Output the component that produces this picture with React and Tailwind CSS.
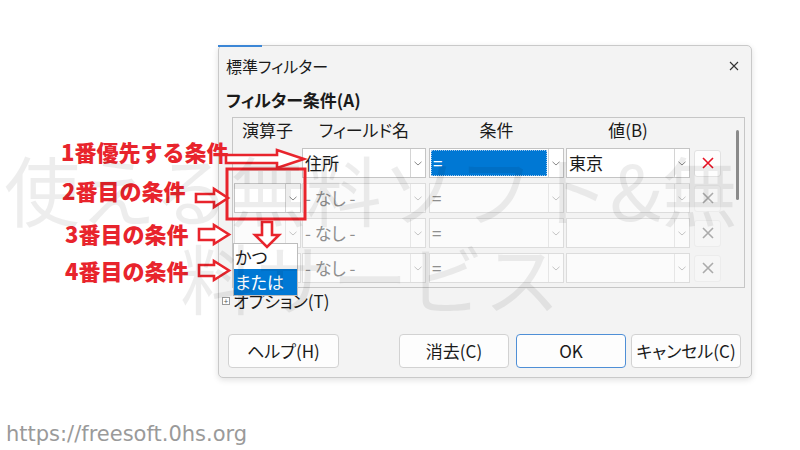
import React from 'react'

const jp = { fontFamily: '"Noto Sans CJK JP", "Noto Sans", sans-serif' }

function Chevron({ color = '#8a8a8a' }) {
  return (
    <svg width="8" height="5" viewBox="0 0 8 5">
      <polyline points="0.5,0.8 4,4 7.5,0.8" fill="none" stroke={color} strokeWidth="1" />
    </svg>
  )
}

// combobox like the LibreOffice/Win11 one
function Combo({ w, text, muted, faint, selected }) {
  return (
    <div
      className={`flex h-[30px] shrink-0 border ${faint ? 'border-[#dcdcdc] bg-[#fbfbfb]' : 'border-[#c4c4c4] bg-white'}`}
      style={{ width: w }}
    >
      <div className="flex flex-1 items-center p-[1px]">
        {selected ? (
          <div className="flex h-full w-full items-center border border-dotted border-[#9cc4ec] bg-[#0078d4] pl-[1px] text-white">
            {text}
          </div>
        ) : (
          <span className={`pl-[1px] ${muted ? 'text-[#8f8f8f]' : 'text-[#1a1a1a]'}`}>{text}</span>
        )}
      </div>
      <div className={`flex w-[15px] items-center justify-center border-l ${faint ? 'border-[#e6e6e6]' : 'border-[#d4d4d4]'}`}>
        <Chevron color={faint ? '#c4c4c4' : '#8a8a8a'} />
      </div>
    </div>
  )
}

function DeleteBtn({ active }) {
  return (
    <div
      className={`ml-[4px] flex h-[27px] w-[27px] shrink-0 items-center justify-center rounded-[3px] border ${active ? 'border-[#e2e2e2] bg-[#fdfdfd]' : 'border-[#ececec] bg-[#f6f6f6]'}`}
    >
      <svg width="12" height="12" viewBox="0 0 12 12">
        <path d="M1 1 L11 11 M11 1 L1 11" stroke={active ? '#e81123' : '#ababab'} strokeWidth="1.6" />
      </svg>
    </div>
  )
}

function Row({ op, field, cond, value, first, children }) {
  return (
    <div className="relative flex h-[30px] items-center">
      <div className="ml-[1px] w-[67px] shrink-0">{op}</div>
      <div className="ml-[1px]">
        <Combo w={124} text={field} muted={!first} faint={!first} />
      </div>
      <div className="ml-[3px]">
        <Combo w={135} text={cond} selected={first} muted={!first} faint={!first} />
      </div>
      <div className="ml-[2px]">
        <Combo w={124} text={value} faint={!first} />
      </div>
      <DeleteBtn active={first} />
      {children}
    </div>
  )
}

function Button({ w, ml, primary, children }) {
  return (
    <div
      className={`flex h-[34px] shrink-0 items-center justify-center rounded-[4px] border bg-[#fdfdfd] text-[#1a1a1a] ${primary ? 'border-[#4f8fd6]' : 'border-[#d2d2d2]'}`}
      style={{ width: w, marginLeft: ml }}
    >
      {children}
    </div>
  )
}

function Dialog() {
  return (
    <div className="relative flex h-[333px] w-[534px] flex-col rounded-[5px] border border-[#c9c9c9] bg-[#f3f3f3] text-[17px] [font-feature-settings:'palt'] shadow-[0_2px_6px_rgba(0,0,0,0.12)]" style={jp}>
      <span className="absolute left-[-1px] top-[-1px] h-[2px] w-[44px] bg-[#3b86d6]" />
      <div className="flex h-[39px] items-center justify-between pl-[7px] pr-[12px]">
        <span className="text-[16px] text-[#1a1a1a]">標準フィルター</span>
        <svg width="10" height="10" viewBox="0 0 10 10">
          <path d="M1 1 L9 9 M9 1 L1 9" stroke="#333" strokeWidth="1.1" />
        </svg>
      </div>
      <div className="mt-[5px] h-[20px] pl-[7px] font-bold leading-[20px] text-[#1a1a1a]">フィルター条件(A)</div>
      <div className="ml-[13px] mt-[7px] flex h-[171px] w-[513px] border border-[#c6c6c6]">
        <div className="flex flex-1 flex-col">
          <div className="flex h-[24px] items-center text-[#1a1a1a]">
            <div className="ml-[1px] w-[67px] text-center">演算子</div>
            <div className="ml-[1px] w-[124px] text-center">フィールド名</div>
            <div className="ml-[3px] w-[135px] text-center">条件</div>
            <div className="ml-[2px] w-[124px] text-center">値(B)</div>
          </div>
          <div className="mt-[6px] flex flex-col gap-[5px]">
            <Row first field="住所" cond="=" value="東京" op={null} />
            <Row field="- なし -" cond="=" value="" op={<Combo w={67} text="" />} />
            <Row field="- なし -" cond="=" value="" op={<Combo w={67} text="" faint />}>
              <div className="absolute left-0 top-[25px] z-10 flex w-[65px] flex-col border border-[#bdbdbd] bg-white">
                <div className="flex h-[25px] items-center pl-[1px] text-[#1a1a1a]">かつ</div>
                <div className="flex h-[26px] items-center bg-[#0078d4] pl-[1px] text-white">または</div>
              </div>
            </Row>
            <Row field="- なし -" cond="=" value="" op={<Combo w={67} text="" faint />} />
          </div>
        </div>
        <div className="w-[8px] pr-[4px] pt-[12px]">
          <div className="h-[70px] w-[3px] rounded-full bg-[#8a8a8a]" />
        </div>
      </div>
      <div className="mt-[3px] flex h-[20px] items-center pl-[3px] text-[#1a1a1a]">
        <span className="mr-[3px] flex h-[8px] w-[8px] items-center justify-center border border-[#9a9a9a] bg-white text-[8px] leading-none text-[#555]">+</span>
        <span>オプション(T)</span>
      </div>
      <div className="mt-[23px] flex">
        <Button w={111} ml={9}>ヘルプ(H)</Button>
        <Button w={110} ml={60}>消去(C)</Button>
        <Button w={110} ml={7} primary>OK</Button>
        <Button w={110} ml={5}>キャンセル(C)</Button>
      </div>
    </div>
  )
}

function Annotations() {
  const red = '#e8242c'
  const labels = [
    { t: '1番優先する条件', x: 61, y: 138 },
    { t: '2番目の条件', x: 62, y: 177 },
    { t: '3番目の条件', x: 65, y: 220 },
    { t: '4番目の条件', x: 65, y: 257 },
  ]
  return (
    <>
      {labels.map((l) => (
        <div
          key={l.t}
          className="absolute text-[22px] font-black leading-[26px] text-[#e8242c]"
          style={{ left: l.x, top: l.y, ...jp }}
        >
          {l.t}
        </div>
      ))}
      <svg className="pointer-events-none absolute left-0 top-0 z-20" width="800" height="450">
        <g fill="#fff" stroke={red} strokeWidth="2.6" strokeLinejoin="miter">
          <polygon points="226,155 277,155 277,150 304,159 277,168 277,163 226,163" />
          <polygon points="196,194 214,194 214,189 228,198 214,207 214,202 196,202" />
          <polygon points="199,229 214,229 214,225 229,234.5 214,244 214,240 199,240" />
          <polygon points="199,265 214,265 214,261 229,270.5 214,280 214,276 199,276" />
          <polygon points="262,222 272,222 272,235 279,235 267,247 255,235 262,235" />
        </g>
        <rect x="227" y="169" width="78" height="50" fill="none" stroke={red} strokeWidth="3" />
      </svg>
    </>
  )
}

export default function App() {
  return (
    <div className="relative h-[450px] w-[800px] overflow-hidden bg-white">
      <div className="pl-[218px] pt-[45px]">
        <Dialog />
      </div>
      <div
        className="ml-[6px] mt-[44px] text-[21px] leading-[24px] text-[#9a9a9a]"
        style={{ fontFamily: '"DejaVu Sans", Verdana, sans-serif' }}
      >
        https://freesoft.0hs.org
      </div>
      {/* faint watermark over everything */}
      <div className="pointer-events-none absolute inset-0 z-30 text-[76px] leading-none text-black/[0.07]" style={jp}>
        <div className="absolute left-[4px] top-[150px] whitespace-nowrap">使える無料ソフト&amp;無</div>
        <div className="absolute left-[180px] top-[238px] whitespace-nowrap">料サービス</div>
      </div>
      <Annotations />
    </div>
  )
}
